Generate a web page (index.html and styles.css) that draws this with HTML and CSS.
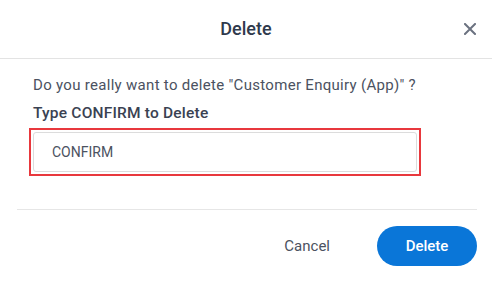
FILE: index.html
```html
<!DOCTYPE html>
<html lang="en">
<head>
    <meta charset="UTF-8">
    <meta name="viewport" content="width=device-width, initial-scale=1.0">
    <title>Delete</title>
    <link rel="stylesheet" href="styles.css">
</head>
<body>
    <div class="modal">
        <div class="modal-header">
            <h1>Delete</h1>
            <button class="close-btn" aria-label="Close">
                <svg width="12" height="12" viewBox="0 0 12 12">
                    <path d="M1 1 L11 11 M11 1 L1 11" stroke="#6b7280" stroke-width="2" stroke-linecap="square"/>
                </svg>
            </button>
        </div>

        <div class="modal-body">
            <div class="confirm-area">
                <p class="question">Do you really want to delete "Customer Enquiry (App)" ?</p>
                <label class="confirm-label" for="confirmInput">Type CONFIRM to Delete</label>
                <!-- red highlight around the input -->
                <div class="input-highlight">
                    <input type="text" id="confirmInput" class="confirm-input" value="CONFIRM">
                </div>
            </div>

            <div class="modal-footer">
                <button class="btn-cancel">Cancel</button>
                <button class="btn-delete">Delete</button>
            </div>
        </div>
    </div>
</body>
</html>
```

FILE: styles.css
```css
* {
    margin: 0;
    padding: 0;
    box-sizing: border-box;
}

body {
    font-family: Roboto, "Liberation Sans", Arial, sans-serif;
    background: #fff;
    color: #4b5261;
}

.modal {
    width: 492px;
    height: 283px;
    background: #fff;
}

.modal-header {
    position: relative;
    height: 59px;
    border-bottom: 1px solid #e3e3e3;
    display: flex;
    align-items: center;
    justify-content: center;
}

.modal-header h1 {
    font-size: 18px;
    font-weight: 500;
    color: #2f3a4c;
    margin-top: -2px;
}

.close-btn {
    position: absolute;
    right: 16px;
    top: 23px;
    width: 12px;
    height: 12px;
    border: none;
    background: none;
    cursor: pointer;
    display: flex;
}

.modal-body {
    padding: 0 15px 0 17px;
}

.confirm-area {
    padding: 16px 0 33px 12px;
    border-bottom: 1px solid #e6e6e6;
}

.question {
    padding-left: 4px;
    font-size: 15px;
    letter-spacing: 0.3px;
    line-height: 20px;
    color: #4b5261;
}

.confirm-label {
    display: block;
    padding-left: 4px;
    margin-top: 8px;
    font-size: 15.5px;
    letter-spacing: 0.2px;
    line-height: 20px;
    font-weight: 500;
    color: #3a4252;
}

.input-highlight {
    margin-top: 5px;
    width: 392px;
    padding: 2px;
    border: 2px solid #e8383d;
}

.confirm-input {
    display: block;
    width: 100%;
    height: 40px;
    padding: 0 18px;
    font-family: inherit;
    font-size: 14px;
    color: #4b5261;
    border: 1px solid #dcdcdc;
    border-radius: 3px;
    outline: none;
}

.modal-footer {
    display: flex;
    justify-content: flex-end;
    align-items: center;
    padding-top: 16px;
    gap: 23px;
}

.btn-cancel {
    border: none;
    background: none;
    font-family: inherit;
    font-size: 15px;
    color: #4b5261;
    padding: 0 24px;
    height: 40px;
    cursor: pointer;
}

.btn-delete {
    width: 100px;
    height: 40px;
    border: none;
    border-radius: 20px;
    background: #0a76d8;
    color: #fff;
    font-family: inherit;
    font-size: 15px;
    font-weight: 500;
    cursor: pointer;
}
```
